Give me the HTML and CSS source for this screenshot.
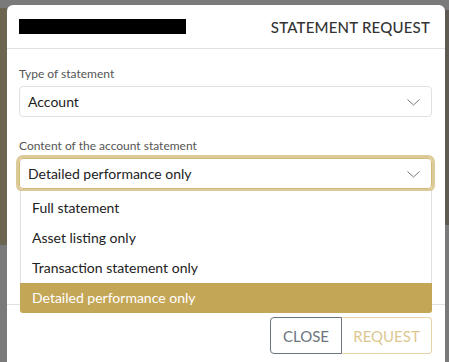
FILE: index.html
```html
<!DOCTYPE html>
<html lang="en">
<head>
<meta charset="utf-8">
<title>Statement request</title>
<link rel="stylesheet" href="styles.css">
</head>
<body>
<div class="modal">
  <div class="modal-header">
    <div class="redacted"></div>
    <h1 class="modal-title">STATEMENT REQUEST</h1>
  </div>
  <div class="modal-body">
    <div class="form-group">
      <label class="form-label">Type of statement</label>
      <div class="select">
        <span>Account</span>
        <svg class="chevron" width="13" height="7" viewBox="0 0 13 7"><path d="M0.5 0.5 L6.5 6 L12.5 0.5" fill="none" stroke="#777" stroke-width="1"/></svg>
      </div>
    </div>
    <div class="form-group last">
      <label class="form-label">Content of the account statement</label>
      <div class="select-wrap">
        <div class="select focused">
          <span>Detailed performance only</span>
          <svg class="chevron" width="13" height="7" viewBox="0 0 13 7"><path d="M0.5 0.5 L6.5 6 L12.5 0.5" fill="none" stroke="#777" stroke-width="1"/></svg>
        </div>
        <ul class="dropdown">
          <li class="option">Full statement</li>
          <li class="option">Asset listing only</li>
          <li class="option">Transaction statement only</li>
          <li class="option selected">Detailed performance only</li>
        </ul>
      </div>
    </div>
  </div>
  <div class="modal-footer">
    <div class="btn-group">
      <button class="btn btn-close">CLOSE</button>
      <button class="btn btn-request">REQUEST</button>
    </div>
  </div>
</div>
</body>
</html>
```
FILE: styles.css
```css
html, body {
  margin: 0;
  padding: 0;
  height: 100%;
  overflow: hidden;
}
body {
  font-family: Lato, "Segoe UI", "Noto Sans", sans-serif;
  color: #212529;
  background:
    linear-gradient(#6c6552, #6c6552) 0 8px / 7px 237px no-repeat,
    linear-gradient(#5f5b52, #5f5b52) 445px 10px / 4px 215px no-repeat,
    #7a7a7a;
}
.modal {
  margin: 5px 4px 0 7px;
  width: 438px;
  height: 357px;
  background: #fff;
  border-radius: 6px 6px 0 0;
}
.modal-header {
  height: 44px;
  display: flex;
  align-items: center;
  justify-content: space-between;
  padding: 0 15px 0 12px;
  border-bottom: 1px solid #dee2e6;
  box-sizing: border-box;
}
.redacted {
  width: 167px;
  height: 15px;
  background: #000;
}
.modal-title {
  margin: 0;
  font-size: 15px;
  font-weight: 500;
  color: #333;
  letter-spacing: 0.2px;
}
.modal-body {
  padding: 16px 13px 0 12px;
  height: 255px;
  box-sizing: border-box;
}
.form-group {
  margin-bottom: 20px;
}
.form-group.last {
  margin-bottom: 0;
}
.form-label {
  display: block;
  font-size: 12px;
  line-height: 18px;
  color: #555;
  margin-bottom: 3px;
}
.select {
  height: 31px;
  box-sizing: border-box;
  border: 1px solid #dee2e6;
  border-radius: 4px;
  display: flex;
  align-items: center;
  justify-content: space-between;
  padding: 0 11px 0 8px;
  font-size: 14px;
  color: #222;
}
.select.focused {
  border-color: #d1b976;
  box-shadow: 0 0 0 3px #dccb99;
}
.chevron {
  display: block;
  margin-top: 1px;
}
.select-wrap {
  position: relative;
}
.dropdown {
  position: absolute;
  left: 1px;
  right: 0;
  top: 33px;
  margin: 0;
  padding: 2px 0 0;
  list-style: none;
  background: #fff;
  border: 1px solid #dee2e6;
  border-top: none;
  border-radius: 0 0 4px 4px;
  z-index: 2;
}
.option {
  height: 30px;
  line-height: 30px;
  padding-left: 11px;
  font-size: 14px;
  color: #222;
}
.option.selected {
  background: #c4a657;
  color: #fff;
  border-radius: 0 0 3px 3px;
  margin: 0 -1px -1px -1px;
  padding-left: 12px;
}
.modal-footer {
  border-top: 1px solid #dee2e6;
  padding: 12px 13px 0 0;
  display: flex;
  justify-content: flex-end;
}
.btn-group {
  display: flex;
}
.btn {
  height: 37px;
  font-family: inherit;
  font-size: 15px;
  background: #fff;
  padding: 0;
  margin: 0;
  cursor: pointer;
}
.btn-close {
  width: 72px;
  border: 1px solid #6c757d;
  border-radius: 4px 0 0 4px;
  color: #6c757d;
}
.btn-request {
  width: 90px;
  border: 1px solid #e3d3a6;
  border-left: none;
  border-radius: 0 4px 4px 0;
  color: #dcc891;
}
```
